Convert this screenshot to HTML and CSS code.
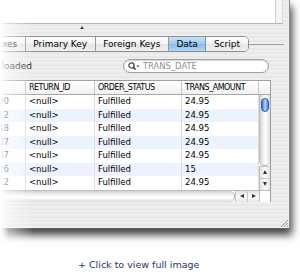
FILE: index.html
```html
<!DOCTYPE html>
<html lang="en">
<head>
<meta charset="UTF-8">
<title>Data tab</title>
<link rel="stylesheet" href="styles.css">
</head>
<body>

<div class="shot">
    <div class="window">
        <div class="top-pane">
            <div class="pane-text"></div>
            <div class="pane-scroll"></div>
        </div>

        <div class="splitter"><span class="grip"></span></div>

        <div class="tabbar">
            <div class="tabs">
                <span class="tab">Indexes</span>
                <span class="tab">Primary Key</span>
                <span class="tab">Foreign Keys</span>
                <span class="tab active">Data</span>
                <span class="tab">Script</span>
            </div>
            <div class="tab-line"></div>
        </div>

        <div class="toolbar">
            <span class="status">7 rows loaded</span>
            <div class="search">
                <svg width="12" height="9" viewBox="0 0 12 9">
                    <circle cx="3.5" cy="3.5" r="2.6" fill="none" stroke="#444" stroke-width="1.3"/>
                    <line x1="5.3" y1="5.3" x2="7.6" y2="7.8" stroke="#444" stroke-width="1.6"/>
                    <polygon points="8.4,3.6 11.4,3.6 9.9,5.6" fill="#555"/>
                </svg>
                <span class="placeholder">TRANS_DATE</span>
            </div>
        </div>

        <div class="grid">
            <div class="grid-body">
                <table class="data">
                    <colgroup>
                        <col style="width:66px">
                        <col style="width:69px">
                        <col style="width:87px">
                        <col style="width:77px">
                    </colgroup>
                    <thead>
                        <tr><th>ID</th><th>RETURN_ID</th><th>ORDER_STATUS</th><th>TRANS_AMOUNT</th></tr>
                    </thead>
                    <tbody>
                        <tr><td class="id">1200</td><td>&lt;null&gt;</td><td>Fulfilled</td><td>24.95</td></tr>
                        <tr><td class="id">1312</td><td>&lt;null&gt;</td><td>Fulfilled</td><td>24.95</td></tr>
                        <tr><td class="id">1448</td><td>&lt;null&gt;</td><td>Fulfilled</td><td>24.95</td></tr>
                        <tr><td class="id">1587</td><td>&lt;null&gt;</td><td>Fulfilled</td><td>24.95</td></tr>
                        <tr><td class="id">1687</td><td>&lt;null&gt;</td><td>Fulfilled</td><td>24.95</td></tr>
                        <tr><td class="id">1726</td><td>&lt;null&gt;</td><td>Fulfilled</td><td>15</td></tr>
                        <tr><td class="id">1812</td><td>&lt;null&gt;</td><td>Fulfilled</td><td>24.95</td></tr>
                    </tbody>
                </table>
                <div class="vscroll">
                    <div class="corner"></div>
                    <div class="vtrack"><div class="knob"></div></div>
                    <div class="varrow"><span class="tri up"></span></div>
                    <div class="varrow"><span class="tri down"></span></div>
                </div>
            </div>
            <div class="hscroll">
                <div class="htrack"></div>
                <div class="harrow"><span class="tri left"></span></div>
                <div class="harrow"><span class="tri right"></span></div>
                <div class="hcorner"></div>
            </div>
        </div>

        <div class="resize">
            <svg width="8" height="8" viewBox="0 0 8 8">
                <line x1="1" y1="8" x2="8" y2="1" stroke="#999"/>
                <line x1="4" y1="8" x2="8" y2="4" stroke="#999"/>
                <line x1="7" y1="8" x2="8" y2="7" stroke="#999"/>
            </svg>
        </div>
    </div>

    <div class="fade"></div>

    <div class="caption">+ Click to view full image</div>
</div>

</body>
</html>
```

FILE: styles.css
```css
* {
    box-sizing: border-box;
}

body {
    margin: 0;
    background: #fff;
    font-family: "DejaVu Sans", sans-serif;
}

.shot {
    position: relative;
    width: 300px;
    height: 280px;
    overflow: hidden;
}

.window {
    width: 290px;
    height: 229px;
    display: flex;
    flex-direction: column;
    background: repeating-linear-gradient(#e8e8e8 0 2px, #eeeeee 2px 4px);
    border-right: 1px solid #8d8d8d;
    border-bottom: 1px solid #5f5f5f;
    box-shadow: 2px 6px 8px rgba(0,0,0,0.75);
}

/* upper text pane */
.top-pane {
    display: flex;
    height: 24px;
    flex: none;
}

.pane-text {
    width: 275px;
    background: #fff;
    border-bottom: 1px solid #b3b3b3;
}

.pane-scroll {
    width: 8px;
    background: #f4f4f4;
    border-left: 1px solid #cfcfcf;
    border-right: 1px solid #dadada;
    border-bottom: 1px solid #b3b3b3;
}

.splitter {
    height: 12px;
    flex: none;
    padding: 2px 0 0 80px;
}

.grip {
    display: block;
    width: 0;
    height: 0;
    border-left: 2.5px solid transparent;
    border-right: 2.5px solid transparent;
    border-bottom: 3px solid #444;
}

/* tabs */
.tabbar {
    height: 16px;
    flex: none;
    display: flex;
    align-items: center;
}

.tabs {
    display: flex;
    height: 16px;
    margin-left: -26px;
    border: 1px solid #8f8f8f;
    border-radius: 5px;
    overflow: hidden;
}

.tab {
    padding: 0 7.5px;
    font-size: 9px;
    line-height: 14px;
    color: #000;
    background: linear-gradient(#fdfdfd, #f2f2f2 50%, #e4e4e4 51%, #f0f0f0);
    border-right: 1px solid #9a9a9a;
}

.tab:last-child {
    border-right: 0;
}

.tab.active {
    background: linear-gradient(#c8e1f8, #9fcaf1 50%, #86bbec 51%, #b3d8f8);
    border-right-color: #6f8fb8;
}

.tab-line {
    width: 35px;
    height: 1px;
    background: #a0a0a0;
}

/* status + search */
.toolbar {
    height: 28px;
    flex: none;
    display: flex;
    align-items: center;
}

.status {
    margin-left: -31px;
    font-size: 9px;
    white-space: nowrap;
    color: #1a1a1a;
}

.search {
    margin-left: auto;
    margin-right: 20px;
    width: 146px;
    height: 14px;
    display: flex;
    align-items: center;
    gap: 3px;
    padding-left: 4px;
    background: #fff;
    border: 1px solid #a0a0a0;
    border-radius: 7px;
    box-shadow: inset 0 1px 1px rgba(0,0,0,0.18);
}

.placeholder {
    font-size: 8.4px;
    color: #8e8e8e;
}

/* table */
.grid {
    flex: none;
    width: 311px;
    margin-left: -40px;
    border-top: 1px solid #9f9f9f;
    border-right: 1px solid #9f9f9f;
    background: #fff;
}

.grid-body {
    display: flex;
}

.data {
    width: 299px;
    table-layout: fixed;
    border-collapse: separate;
    border-spacing: 0;
}

.data th {
    height: 14px;
    padding: 0 3px;
    font-size: 8px;
    font-weight: normal;
    letter-spacing: -0.5px;
    text-align: left;
    white-space: nowrap;
    color: #000;
    background: linear-gradient(#fff, #f0f0f0);
    border-right: 1px solid #c4c4c4;
    border-bottom: 1px solid #a8a8a8;
}

.data td {
    height: 13.5px;
    padding: 0 3px;
    font-size: 8.5px;
    line-height: 13px;
    white-space: nowrap;
    color: #000;
    border-right: 1px solid #dcdcdc;
}

.data td.id {
    text-align: right;
    padding-right: 16px;
}

.data tbody tr:nth-child(even) td {
    background: #edf3fe;
}

.vscroll {
    width: 11px;
    display: flex;
    flex-direction: column;
}

.corner {
    height: 14px;
    background: linear-gradient(#fff, #f0f0f0);
    border-bottom: 1px solid #a8a8a8;
}

.vtrack {
    flex: 1;
    padding: 3px 1px 0;
    border-left: 1px solid #bdbdbd;
    border-bottom: 1px solid #b0b0b0;
    border-radius: 0 0 5px 5px;
    background: linear-gradient(to right, #d2d2d2, #f6f6f6 40%, #fff 60%, #dcdcdc);
}

.knob {
    height: 14px;
    border: 1px solid #2a5cae;
    border-radius: 4px;
    background: linear-gradient(to right, #2f68c9, #86b9f2 35%, #b4d8fb 55%, #3f7fe0);
}

.varrow, .harrow {
    display: flex;
    align-items: center;
    justify-content: center;
    background: linear-gradient(to right, #e2e2e2, #fbfbfb 50%, #e6e6e6);
}

.varrow {
    height: 12px;
    border-left: 1px solid #bdbdbd;
    border-top: 1px solid #c8c8c8;
}

.hscroll {
    display: flex;
    height: 12px;
    border-top: 1px solid #bdbdbd;
}

.htrack {
    flex: 1;
    border-right: 1px solid #b0b0b0;
    border-radius: 0 6px 6px 0;
    background: linear-gradient(#d2d2d2, #f6f6f6 40%, #fff 60%, #dcdcdc);
}

.harrow {
    width: 12px;
    border-left: 1px solid #c8c8c8;
    background: linear-gradient(#e2e2e2, #fbfbfb 50%, #e6e6e6);
}

.hcorner {
    width: 11px;
    background: #fff;
    border-left: 1px solid #bdbdbd;
}

.tri {
    width: 0;
    height: 0;
    border: 2.5px solid transparent;
}

.tri.up { border-bottom: 4px solid #333; border-top: 0; }
.tri.down { border-top: 4px solid #333; border-bottom: 0; }
.tri.left { border-right: 4px solid #333; border-left: 0; }
.tri.right { border-left: 4px solid #333; border-right: 0; }

.resize {
    align-self: flex-end;
    width: 8px;
    height: 8px;
    margin: auto 1px 1px 0;
}

.resize svg {
    display: block;
}

/* white fade over the left edge of the screenshot */
.fade {
    position: absolute;
    left: 0;
    top: 0;
    width: 34px;
    height: 250px;
    background: linear-gradient(to right, #fff 0, rgba(255,255,255,0.55) 8px, rgba(255,255,255,0) 34px);
}

.caption {
    margin: 30px 0 0 78px;
    font-size: 9.5px;
    line-height: 12px;
    color: #273763;
}
```
